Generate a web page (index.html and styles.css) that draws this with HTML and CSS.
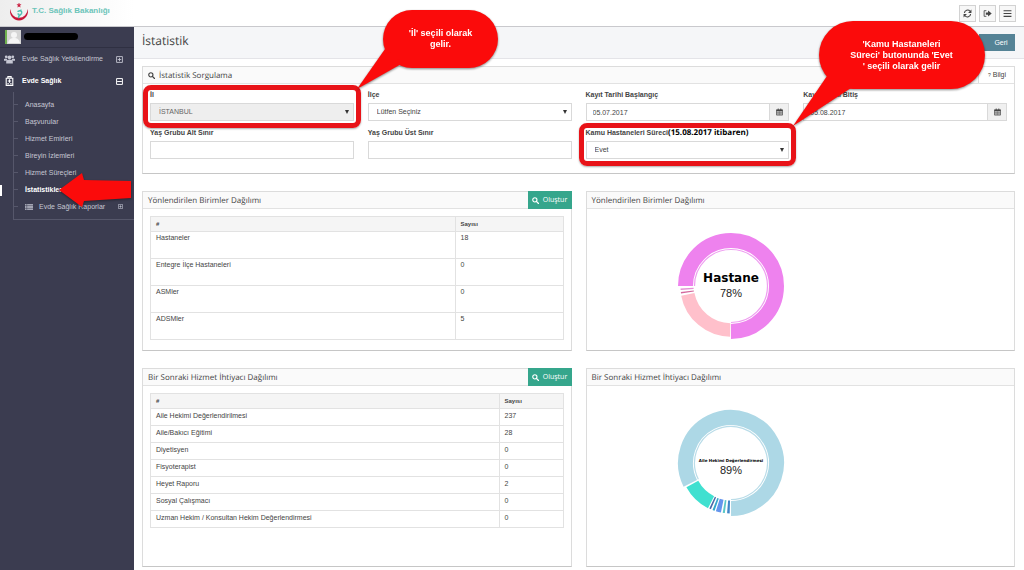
FILE: index.html
```html
<!DOCTYPE html>
<html lang="tr">
<head>
<meta charset="utf-8">
<title>İstatistik</title>
<link rel="stylesheet" href="styles.css">
</head>
<body>
<svg class="defs" aria-hidden="true">
  <symbol id="search" viewBox="0 0 16 16"><circle cx="6.5" cy="6.5" r="4.8" fill="none" stroke="currentColor" stroke-width="2.6"/><path d="M10 10l5 5" stroke="currentColor" stroke-width="3" stroke-linecap="round"/></symbol>
  <symbol id="calendar" viewBox="0 0 16 16"><path d="M1 3h14v12H1z" fill="none" stroke="currentColor" stroke-width="1.6"/><path d="M1 3h14v3H1zM4 0h2v4H4zM10 0h2v4h-2z" fill="currentColor"/><path d="M1 9h14M1 12h14M4.7 6v9M8 6v9M11.300 6v9" stroke="currentColor" stroke-width="1"/></symbol>
  <symbol id="plus" viewBox="0 0 12 12"><path d="M1 1h10v10H1zM3 6h6M6 3v6" fill="none" stroke="currentColor" stroke-width="1.5"/></symbol>
  <symbol id="minus" viewBox="0 0 12 12"><path d="M1 1h10v10H1zM2 6h8" fill="none" stroke="currentColor" stroke-width="1.7"/></symbol>
</svg>
<header class="topbar">
  <a class="brand" href="#">
    <svg class="brand-logo" viewBox="0 0 60 66">
      <path d="M4 18a27 27 0 1 0 52 0a24 24 0 1 1-52 0z" fill="#c8173a"/>
      <path d="M30 0l1.500 4.500h5l-4 3 1.500 5-4-3-4 3 1.500-5-4-3h5z" fill="#c8173a" stroke="#c8173a"/>
      <path d="M27 25c8-4 13 0 11 6-2 5-10 6-9 13M27 33c4 0 4 4 2 8M36 21l-2 3" fill="none" stroke="#49bfb0" stroke-width="4" stroke-linecap="round"/>
    </svg>
    <span>T.C. Sağlık Bakanlığı</span>
  </a>
  <div class="tools">
    <button class="tool" aria-label="Yenile"><svg viewBox="0 0 16 16"><path d="M2.500 7a5.600 5.600 0 0 1 10-3M13.500 9a5.600 5.600 0 0 1-10 3" fill="none" stroke="currentColor" stroke-width="2"/><path d="M15 1v6H9zM1 15V9h6z" fill="currentColor"/></svg></button>
    <button class="tool" aria-label="Çıkış"><svg viewBox="0 0 16 16"><path d="M6 3H2v10h4" fill="none" stroke="currentColor" stroke-width="1.500"/><path d="M5 6h4V2.500L15.500 8 9 13.500V10H5z" fill="currentColor"/></svg></button>
    <button class="tool" aria-label="Menü"><svg viewBox="0 0 16 16"><path d="M1 3h14M1 8h14M1 13h14" stroke="currentColor" stroke-width="2"/></svg></button>
  </div>
</header>
<div class="shell">
  <nav class="sidebar">
    <div class="user">
      <svg class="avatar" viewBox="0 0 16 14"><path d="M0 0h16v14H0z" fill="#d5d5d5"/><path d="M0 0h2v14H0z" fill="#6fb04f"/><circle cx="9" cy="5" r="3" fill="#f5f5f5"/><path d="M3 13c1-4 3-5 6-5s5 1 6 5z" fill="#f5f5f5"/></svg>
      <span class="redacted"></span>
    </div>
    <a class="menu" href="#">
      <svg class="menu-icon" viewBox="0 0 20 16"><circle cx="4" cy="4" r="2.500"/><circle cx="16" cy="4" r="2.500"/><circle cx="10" cy="5" r="3.500"/><path d="M0 11V8q3-2 6 0l-1 3zM20 11V8q-3-2-6 0l1 3zM4 16v-4q1-3 6-3t6 3v4z"/></svg>
      <span>Evde Sağlık Yetkilendirme</span><svg class="toggle"><use href="#plus"/></svg>
    </a>
    <a class="menu menu-open" href="#">
      <svg class="menu-icon" viewBox="0 0 20 18"><path d="M4 4h12v13H4zM7 4V1h6v3" fill="none" stroke="currentColor" stroke-width="2"/><path d="M9 6h2v2h2v2h-2v2H9v-2H7V8h2zM6 13h3v2H6zM11 13h3v2h-3z"/></svg>
      <span>Evde Sağlık</span><svg class="toggle"><use href="#minus"/></svg>
    </a>
    <ul class="submenu">
      <li><a href="#">Anasayfa</a></li>
      <li><a href="#">Başvurular</a></li>
      <li><a href="#">Hizmet Emirleri</a></li>
      <li><a href="#">Bireyin İzlemleri</a></li>
      <li><a href="#">Hizmet Süreçleri</a></li>
      <li class="current"><a href="#">İstatistikler</a>
        <svg class="pointer" viewBox="0 0 72 34"><path d="M0 17L23 0l2 7 47 1v17l-47 3-2 6z"/></svg></li>
      <li><a class="reports" href="#"><svg class="list-icon" viewBox="0 0 16 12"><path d="M0 1.500h16M0 4.500h16M0 7.500h16M0 10.500h16" stroke="currentColor" stroke-width="2"/><path d="M3.500 0v12" stroke="#3b3c50"/></svg><span>Evde Sağlık Raporlar</span><svg class="toggle"><use href="#plus"/></svg></a></li>
    </ul>
  </nav>
  <main class="main">
    <div class="titlebar"><h1>İstatistik</h1><button class="back">Geri</button></div>
    <div class="content">
      <section class="panel">
        <div class="panel-head query-head"><svg class="search-icon"><use href="#search"/></svg><h2>İstatistik Sorgulama</h2><a class="info" href="#"><small>?</small> Bilgi</a></div>
        <form class="fields">
          <div class="field">
            <label for="il">İl</label>
            <div class="control select"><select id="il" disabled><option>İSTANBUL</option></select></div>
            <span class="highlight"></span>
            <div class="callout callout-il">
              <svg class="tail" viewBox="0 0 46 42"><path d="M0 42L28 2l18 14z"/></svg>
              <p>'İl' seçili olarak<br>gelir.</p>
            </div>
          </div>
          <div class="field">
            <label for="ilce">İlçe</label>
            <div class="control select"><select id="ilce"><option>Lütfen Seçiniz</option></select></div>
          </div>
          <div class="field">
            <label for="start">Kayıt Tarihi Başlangıç</label>
            <div class="control"><input id="start" value="05.07.2017"><button type="button" class="date" aria-label="Takvim"><svg><use href="#calendar"/></svg></button></div>
          </div>
          <div class="field">
            <label for="end">Kayıt Tarihi Bitiş</label>
            <div class="control"><input id="end" value="05.08.2017"><button type="button" class="date" aria-label="Takvim"><svg><use href="#calendar"/></svg></button></div>
          </div>
          <div class="field">
            <label for="min">Yaş Grubu Alt Sınır</label>
            <div class="control"><input id="min"></div>
          </div>
          <div class="field">
            <label for="max">Yaş Grubu Üst Sınır</label>
            <div class="control"><input id="max"></div>
          </div>
          <div class="field">
            <label for="kamu">Kamu Hastaneleri Süreci<b class="note">(15.08.2017 itibaren)</b></label>
            <div class="control select"><select id="kamu"><option>Evet</option></select></div>
            <span class="highlight"></span>
            <div class="callout callout-kamu">
              <svg class="tail" viewBox="0 0 58 52"><path d="M0 52L34 2l24 12z"/></svg>
              <p>'Kamu Hastaneleri<br>Süreci' butonunda 'Evet<br>' seçili olarak gelir</p>
            </div>
          </div>
        </form>
      </section>
      <div class="pair">
        <section class="panel">
          <div class="panel-head"><h2>Yönlendirilen Birimler Dağılımı</h2><button class="create"><svg><use href="#search"/></svg>Oluştur</button></div>
          <table class="grid units">
            <thead><tr><th>#</th><th>Sayısı</th></tr></thead>
            <tbody>
              <tr><td>Hastaneler</td><td>18</td></tr>
              <tr><td>Entegre İlçe Hastaneleri</td><td>0</td></tr>
              <tr><td>ASMler</td><td>0</td></tr>
              <tr><td>ADSMler</td><td>5</td></tr>
            </tbody>
          </table>
        </section>
        <section class="panel">
          <div class="panel-head"><h2>Yönlendirilen Birimler Dağılımı</h2></div>
          <div class="chart">
            <svg class="donut" viewBox="-54 -54 108 108">
              <g fill="none">
                <circle r="45.500" stroke="#ee82ee" stroke-width="15" pathLength="360" stroke-dasharray="270 90" transform="rotate(180)"/>
                <circle r="36.500" stroke="#ee9df0" stroke-width="1.200" pathLength="360" stroke-dasharray="270 90" transform="rotate(180)"/>
                <circle r="44" stroke="#ffc0cb" stroke-width="13.500" pathLength="360" stroke-dasharray="78 282" transform="rotate(91)"/>
                <circle r="44" stroke="#d4679c" stroke-width="13" pathLength="360" stroke-dasharray="1.800 358.200" transform="rotate(171.500)"/>
                <circle r="44" stroke="#e48fd4" stroke-width="13" pathLength="360" stroke-dasharray="1.800 358.200" transform="rotate(175.500)"/>
              </g>
              <text class="donut-name" y="-4">Hastane</text>
              <text class="donut-value" y="11">78%</text>
            </svg>
          </div>
        </section>
      </div>
      <div class="pair">
        <section class="panel">
          <div class="panel-head"><h2>Bir Sonraki Hizmet İhtiyacı Dağılımı</h2><button class="create"><svg><use href="#search"/></svg>Oluştur</button></div>
          <table class="grid services">
            <thead><tr><th>#</th><th>Sayısı</th></tr></thead>
            <tbody>
              <tr><td>Aile Hekimi Değerlendirilmesi</td><td>237</td></tr>
              <tr><td>Aile/Bakıcı Eğitimi</td><td>28</td></tr>
              <tr><td>Diyetisyen</td><td>0</td></tr>
              <tr><td>Fisyoterapist</td><td>0</td></tr>
              <tr><td>Heyet Raporu</td><td>2</td></tr>
              <tr><td>Sosyal Çalışmacı</td><td>0</td></tr>
              <tr><td>Uzman Hekim / Konsultan Hekim Değerlendirmesi</td><td>0</td></tr>
            </tbody>
          </table>
        </section>
        <section class="panel">
          <div class="panel-head"><h2>Bir Sonraki Hizmet İhtiyacı Dağılımı</h2></div>
          <div class="chart">
            <svg class="donut" viewBox="-54 -54 108 108">
              <g fill="none">
                <circle r="45.500" stroke="#add8e6" stroke-width="15" pathLength="360" stroke-dasharray="296.500 63.500" transform="rotate(153.500)"/>
                <circle r="36.500" stroke="#b9dce8" stroke-width="1.200" pathLength="360" stroke-dasharray="296.500 63.500" transform="rotate(153.500)"/>
                <circle r="44" stroke="#40e0d0" stroke-width="13.500" pathLength="360" stroke-dasharray="34.500 325.500" transform="rotate(117)"/>
                <circle r="44" stroke="#4a68a8" stroke-width="13" pathLength="360" stroke-dasharray="2 358" transform="rotate(113.500)"/>
                <circle r="44" stroke="#35a8cc" stroke-width="13" pathLength="360" stroke-dasharray="2.500 357.500" transform="rotate(109)"/>
                <circle r="44" stroke="#6495ed" stroke-width="13" pathLength="360" stroke-dasharray="6 354" transform="rotate(101.500)"/>
                <circle r="44" stroke="#5cc8c8" stroke-width="13" pathLength="360" stroke-dasharray="2.500 357.500" transform="rotate(97)"/>
                <circle r="44" stroke="#3f86c8" stroke-width="13" pathLength="360" stroke-dasharray="3 357" transform="rotate(91.500)"/>
              </g>
              <text class="donut-name donut-name-long" y="-1">Aile Hekimi Değerlendirmesi</text>
              <text class="donut-value" y="11">89%</text>
            </svg>
          </div>
        </section>
      </div>
    </div>
  </main>
</div>
</body>
</html>
```
FILE: styles.css
```css
* { box-sizing: border-box; }
body {
  margin: 0;
  min-height: 100vh;
  display: flex;
  flex-direction: column;
  background: #fff;
  color: #444;
  font: 7px/10px "Liberation Sans", Arial, sans-serif;
}
h1, h2, p, ul { margin: 0; padding: 0; font-weight: normal; }
a { color: inherit; text-decoration: none; }
button, input, select { font: inherit; color: inherit; margin: 0; border-radius: 0; }
svg { display: block; flex: none; }
.defs { position: absolute; width: 0; height: 0; }

.topbar { height: 27px; display: flex; justify-content: space-between; border-bottom: 1px solid #c9c9cd; }
.brand {
  width: 134px;
  display: flex;
  align-items: flex-start;
  gap: 3px;
  padding: 3px 0 0 9px;
  background: linear-gradient(90deg, #eee, #fff);
  color: #6cc4b9;
  font: bold 8px/15px "Liberation Sans", Arial, sans-serif;
}
.brand-logo { width: 20px; height: 22px; }
.tools { display: flex; gap: 3px; padding: 5px 8px 0 0; }
.tool {
  width: 17px; height: 17px; padding: 0;
  display: grid; place-items: center;
  background: #f7f7f7; border: 1px solid #d2d2d2; color: #444;
}
.tool svg { width: 9px; height: 9px; }

.shell { flex: 1; display: flex; }
.sidebar { width: 134px; flex: none; background: #3b3c50; color: #c6c7d3; }
.user { height: 21px; padding: 3px 5px; display: flex; gap: 3px; align-items: flex-start; border-bottom: 1px solid #2f3042; }
.avatar { width: 16px; height: 14px; }
.redacted { width: 54px; height: 7px; margin-top: 3px; border-radius: 4px; background: #000; }
.menu { height: 22px; padding: 0 11px 0 4px; display: flex; align-items: center; gap: 7px; }
.menu span, .reports span { flex: 1; white-space: nowrap; }
.menu-icon { width: 11px; height: 10px; fill: currentColor; }
.menu-open { color: #fff; font-weight: bold; }
.toggle { width: 7px; height: 7px; }
.submenu { list-style: none; margin-left: 13px; padding: 4px 0 4px; border-left: 1px solid #56576b; border-bottom: 1px solid #56576b; }
.submenu li { position: relative; height: 17px; display: flex; align-items: center; }
.submenu li::before { content: ""; width: 4px; height: 1px; margin-right: 7px; background: #56576b; }
.submenu .current { color: #fff; font-weight: bold; }
.current::after { content: ""; position: absolute; left: -14px; top: 4px; width: 2px; height: 11px; background: #fff; }
.pointer { position: absolute; left: 45px; top: -8px; z-index: 2; width: 72px; height: 34px; fill: #fb0b0b; filter: drop-shadow(0 1px 1px #0006); }
.reports { flex: 1; display: flex; align-items: center; gap: 6px; padding-right: 11px; }
.list-icon { width: 8px; height: 6px; }
.reports .toggle { width: 5px; height: 5px; }

.main { flex: 1; min-width: 0; }
.titlebar { height: 32px; padding: 0 9px 0 8px; display: flex; align-items: center; justify-content: space-between; background: #f5f6f8; border-bottom: 1px solid #e4e4e8; }
h1 { font: 12px/18px "Open Sans", sans-serif; margin-bottom: 4px; }
.back { width: 36px; height: 17px; padding: 0 0 0 8px; border: 0; background: #558396; color: #fff; }
.content { padding: 7px 9px 3px 8px; display: grid; gap: 17px; }
.pair { display: grid; grid-template-columns: 1fr 1fr; gap: 14px; }
.panel { min-width: 0; border: 1px solid #dcdcdc; border-bottom-color: #c6c6c6; background: #fff; }
.panel-head { height: 17px; padding-left: 5px; display: flex; align-items: center; justify-content: space-between; border-bottom: 1px solid #e2e2e2; background: #fafafa; }
h2 { padding-top: 2px; font: 8px/12px "Open Sans", sans-serif; white-space: nowrap; }
h1, h2 { text-rendering: geometricPrecision; }
.query-head { gap: 4px; }
.query-head h2 { flex: 1; }
.search-icon { width: 7px; height: 7px; }
.info { align-self: stretch; padding: 3px 8px 0 9px; border-left: 1px solid #ddd; background: #fff; }
.info small { font-size: 5px; }
.create { align-self: stretch; margin: -1px -1px -1px 0; width: 44px; padding: 0; display: flex; align-items: center; justify-content: center; gap: 4px; border: 0; background: #35a68c; color: #fff; font: 7px/12px "Open Sans", sans-serif; }
.create svg { width: 7px; height: 7px; }

.fields { padding: 6px 7px 14px; display: grid; grid-template-columns: repeat(4, 1fr); gap: 7px 14px; }
.field { position: relative; min-width: 0; }
.field label { display: block; height: 13px; font-weight: bold; white-space: nowrap; }
.note { color: #000; font: bold 8px/10px "Open Sans", sans-serif; text-rendering: geometricPrecision; }
.control { position: relative; display: flex; height: 18px; }
.control input, .control select { flex: 1; min-width: 0; height: 18px; padding: 0 6px; border: 1px solid #d9d9d9; background: #fff; outline: 0; }
.control select { appearance: none; padding: 0 8px; opacity: 1; }
.control select:disabled { background: #eee; color: #666; }
.select::after { content: ""; position: absolute; right: 5px; top: 7px; border: 2px solid transparent; border-top: 4px solid #333; border-bottom: 0; }
.date { width: 19px; padding: 0; display: grid; place-items: center; border: 1px solid #d9d9d9; border-left: 0; background: #f0f0f0; }
.date svg { width: 7px; height: 8px; }
.highlight { position: absolute; inset: -5px -7px -7px; z-index: 1; border: 5px solid #e81318; border-radius: 8px; pointer-events: none; box-shadow: 0 1px 2px #0005; }
.callout { position: absolute; z-index: 3; display: grid; place-items: center; border-radius: 34px; background: #fb0b0b; color: #fff; text-align: center; filter: drop-shadow(0 1px 1px #0007); }
.callout p { position: relative; font: bold 9px/11px "Liberation Sans", Arial, sans-serif; white-space: nowrap; }
.callout-il { left: 233px; top: -80px; width: 115px; height: 58px; }
.callout-kamu { left: 233px; top: -107px; width: 166px; height: 68px; }
.tail { position: absolute; fill: #fb0b0b; }
.callout-il .tail { left: -26px; top: 37px; width: 46px; height: 42px; }
.callout-kamu .tail { left: -26px; top: 53px; width: 58px; height: 52px; }

.grid { width: calc(100% - 14px); margin: 7px 7px 10px; border-collapse: collapse; table-layout: fixed; }
.grid th, .grid td { padding: 1px 5px; border: 1px solid #e2e2e2; text-align: left; vertical-align: top; }
.grid th { height: 15px; padding-top: 2px; background: #f5f5f5; font-size: 6px; }
.units th:last-child { width: 108px; }
.units td { height: 27px; }
.services { margin-bottom: 38px; }
.services th:last-child { width: 64px; }
.services td { height: 17px; padding-top: 2px; }
.chart { display: flex; justify-content: center; padding: 23px 138px 0 0; }
.donut { width: 108px; height: 108px; }
.donut text { text-anchor: middle; fill: #222; }
.donut .donut-name { font: bold 12px "DejaVu Sans", sans-serif; fill: #000; }
.donut .donut-name-long { font-size: 4px; }
.donut-value { font: 11px "Liberation Sans", Arial, sans-serif; }
```
